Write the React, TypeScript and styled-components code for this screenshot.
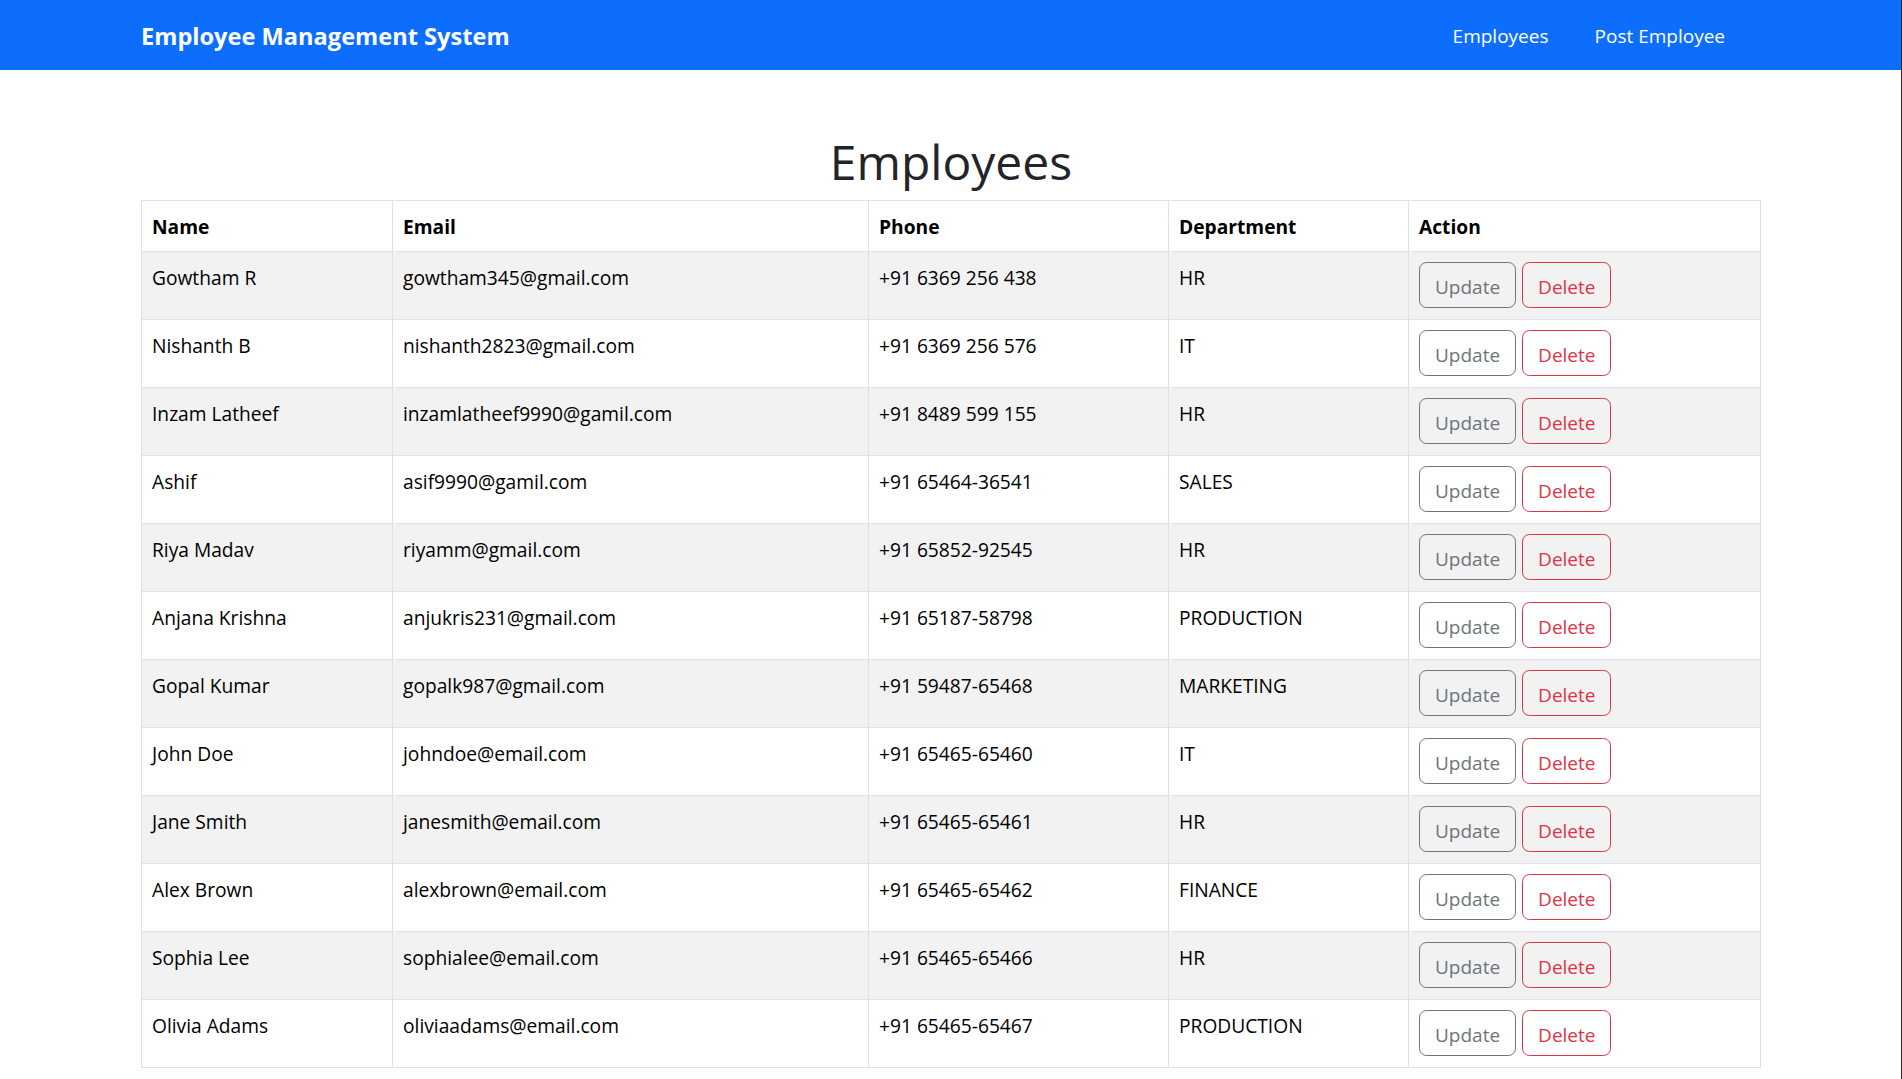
import * as React from 'react';
import styled, { createGlobalStyle } from 'styled-components';

interface Employee {
  name: string;
  email: string;
  phone: string;
  department: string;
}

const employees: Employee[] = [
  { name: 'Gowtham R', email: 'gowtham345@gmail.com', phone: '+91 6369 256 438', department: 'HR' },
  { name: 'Nishanth B', email: 'nishanth2823@gmail.com', phone: '+91 6369 256 576', department: 'IT' },
  { name: 'Inzam Latheef', email: 'inzamlatheef9990@gamil.com', phone: '+91 8489 599 155', department: 'HR' },
  { name: 'Ashif', email: 'asif9990@gamil.com', phone: '+91 65464-36541', department: 'SALES' },
  { name: 'Riya Madav', email: 'riyamm@gmail.com', phone: '+91 65852-92545', department: 'HR' },
  { name: 'Anjana Krishna', email: 'anjukris231@gmail.com', phone: '+91 65187-58798', department: 'PRODUCTION' },
  { name: 'Gopal Kumar', email: 'gopalk987@gmail.com', phone: '+91 59487-65468', department: 'MARKETING' },
  { name: 'John Doe', email: 'johndoe@email.com', phone: '+91 65465-65460', department: 'IT' },
  { name: 'Jane Smith', email: 'janesmith@email.com', phone: '+91 65465-65461', department: 'HR' },
  { name: 'Alex Brown', email: 'alexbrown@email.com', phone: '+91 65465-65462', department: 'FINANCE' },
  { name: 'Sophia Lee', email: 'sophialee@email.com', phone: '+91 65465-65466', department: 'HR' },
  { name: 'Olivia Adams', email: 'oliviaadams@email.com', phone: '+91 65465-65467', department: 'PRODUCTION' },
];

// Segoe UI isn't around, Open Sans runs ~4% wider so sizes are nudged down
const FONT = '"Segoe UI", "Open Sans", "Noto Sans", sans-serif';

const GlobalStyle = createGlobalStyle`
  * { box-sizing: border-box; }
  body {
    margin: 0;
    font-family: ${FONT};
    font-size: 19.2px;
    line-height: 30px;
    color: #212529;
    background: #fff;
  }
`;

const Navbar = styled.nav`
  background: #0d6efd;
  height: 70px;
`;

const NavInner = styled.div`
  width: 1620px;
  margin: 0 auto;
  height: 100%;
  padding-top: 2px;
  display: flex;
  align-items: center;
  justify-content: space-between;
`;

const Brand = styled.a`
  color: #fff;
  font-size: 23.6px;
  font-weight: 700;
  line-height: 37px;
  text-decoration: none;
  cursor: pointer;
`;

const NavLinks = styled.div`
  display: flex;
  align-items: center;
  gap: 46px;
  margin-right: 36px;
`;

const NavLink = styled.a`
  color: #fff;
  font-size: 19px;
  text-decoration: none;
  cursor: pointer;
`;

const Container = styled.main`
  width: 1620px;
  margin: 60px auto 0;
`;

const Heading = styled.h1`
  margin: 0 0 10px;
  padding: 3px 0 0;
  height: 60px;
  text-align: center;
  font-size: 48px;
  font-weight: 500;
  line-height: 57px;
  color: #212529;
`;

const Table = styled.table`
  width: 1620px;
  table-layout: fixed;
  border-collapse: collapse;
  color: #000;
`;

const Th = styled.th`
  text-align: left;
  font-weight: 700;
  padding: 11px 10px 9px;
  border: 1px solid #dee2e6;
  vertical-align: bottom;
`;

const Row = styled.tr<{ $striped: boolean }>`
  background: ${(p) => (p.$striped ? '#f2f2f2' : '#fff')};
`;

const Td = styled.td`
  padding: 11px 10px 9px;
  border: 1px solid #dee2e6;
  vertical-align: top;
  height: 68px;
`;

const Actions = styled.div`
  display: flex;
  gap: 6px;
  margin-top: -1px;
`;

const OutlineButton = styled.button<{ $tone: string }>`
  font-family: ${FONT};
  font-size: 19px;
  line-height: 30px;
  padding: 9px 15px 5px;
  border: 1.25px solid ${(p) => p.$tone};
  border-radius: 7.5px;
  color: ${(p) => p.$tone};
  background: transparent;
  cursor: pointer;
`;

const Edge = styled.div`
  position: fixed;
  top: 0;
  right: 0;
  bottom: 0;
  width: 1px;
  background: #2b2b2b;
`;

const App = (): any => {
  return (
    <>
      <GlobalStyle />
      <Navbar>
        <NavInner>
          <Brand>Employee Management System</Brand>
          <NavLinks>
            <NavLink>Employees</NavLink>
            <NavLink>Post Employee</NavLink>
          </NavLinks>
        </NavInner>
      </Navbar>
      <Container>
        <Heading>Employees</Heading>
        <Table>
          <colgroup>
            <col style={{ width: 251 }} />
            <col style={{ width: 476 }} />
            <col style={{ width: 300 }} />
            <col style={{ width: 240 }} />
            <col />
          </colgroup>
          <thead>
            <tr>
              <Th>Name</Th>
              <Th>Email</Th>
              <Th>Phone</Th>
              <Th>Department</Th>
              <Th>Action</Th>
            </tr>
          </thead>
          <tbody>
            {employees.map((e, i) => (
              <Row key={e.email} $striped={i % 2 === 0}>
                <Td>{e.name}</Td>
                <Td>{e.email}</Td>
                <Td>{e.phone}</Td>
                <Td>{e.department}</Td>
                <Td>
                  <Actions>
                    <OutlineButton $tone="#6c757d">Update</OutlineButton>
                    <OutlineButton $tone="#dc3545">Delete</OutlineButton>
                  </Actions>
                </Td>
              </Row>
            ))}
          </tbody>
        </Table>
      </Container>
      <Edge />
    </>
  );
};

export default App;
